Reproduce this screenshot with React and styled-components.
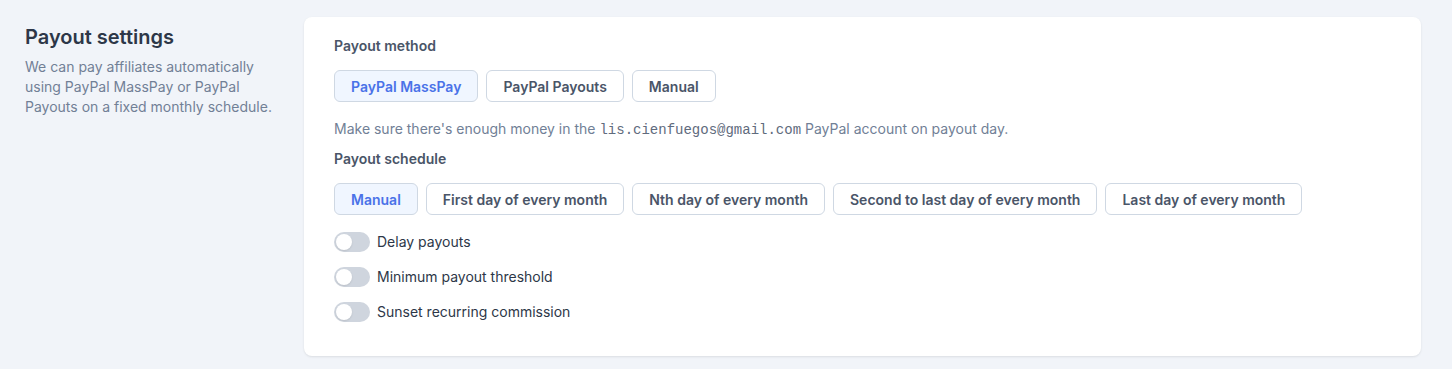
import React, {useState} from 'react';
import styled, {createGlobalStyle} from 'styled-components';

const GlobalStyle = createGlobalStyle`
  html, body {
    margin: 0;
    background: #f1f4f9;
    font-family: Inter, "Noto Sans", sans-serif;
  }
`;

const Page = styled.div`
  display: flex;
  align-items: flex-start;
  gap: 24px;
  padding: 17px 31px 13px 25px;
`;

const Intro = styled.div`
  width: 255px;
  flex-shrink: 0;
  padding-top: 8px;
`;

const Heading = styled.h2`
  margin: 0 0 8px;
  font-size: 20px;
  line-height: 24px;
  font-weight: 600;
  color: #2d3748;
`;

const Description = styled.p`
  margin: 0;
  font-size: 14px;
  line-height: 20px;
  color: #718096;
`;

const Card = styled.div`
  flex: 1;
  background: #fff;
  border-radius: 8px;
  box-shadow: 0 1px 3px rgba(0, 0, 0, 0.06), 0 1px 2px rgba(0, 0, 0, 0.04);
  padding: 19px 30px 34px;
  display: flex;
  flex-direction: column;
`;

const Label = styled.div`
  font-size: 14px;
  line-height: 20px;
  font-weight: 600;
  color: #4a5568;
  margin-top: ${p => p.$top || 0}px;
`;

const ButtonRow = styled.div`
  display: flex;
  gap: 8px;
  margin-top: 14px;
`;

const Choice = styled.button`
  height: 32px;
  padding: 0 16px;
  border-radius: 6px;
  border: 1px solid #cfd8e3;
  background: ${p => (p.$active ? '#f0f6ff' : '#fff')};
  color: ${p => (p.$active ? '#4a72e8' : '#4a5568')};
  font-family: inherit;
  font-size: 14px;
  font-weight: 600;
  cursor: pointer;
`;

const Help = styled.p`
  margin: 17px 0 0;
  font-size: 14px;
  line-height: 20px;
  color: #718096;
`;

const Mono = styled.code`
  font-family: "Liberation Mono", "DejaVu Sans Mono", monospace;
  font-size: 14px;
  color: #5f6b7d;
`;

const ToggleList = styled.div`
  display: flex;
  flex-direction: column;
  gap: 15px;
  margin-top: 17px;
`;

const ToggleRow = styled.label`
  display: flex;
  align-items: center;
  gap: 7px;
  font-size: 14px;
  line-height: 20px;
  color: #2d3748;
  cursor: pointer;
`;

const Track = styled.span`
  position: relative;
  width: 36px;
  height: 20px;
  border-radius: 10px;
  background: ${p => (p.$on ? '#4a72e8' : '#cfd5de')};
  flex-shrink: 0;
`;

const Knob = styled.span`
  position: absolute;
  top: 2px;
  left: ${p => (p.$on ? '18px' : '2px')};
  width: 16px;
  height: 16px;
  border-radius: 50%;
  background: #fff;
  box-shadow: 0 1px 2px rgba(0, 0, 0, 0.1);
`;

const methods = ['PayPal MassPay', 'PayPal Payouts', 'Manual'];
const schedules = [
  'Manual',
  'First day of every month',
  'Nth day of every month',
  'Second to last day of every month',
  'Last day of every month'
];
const toggles = ['Delay payouts', 'Minimum payout threshold', 'Sunset recurring commission'];

export default function App() {
  const [method, setMethod] = useState(methods[0]);
  const [schedule, setSchedule] = useState(schedules[0]);
  const [on, setOn] = useState({});

  return (
    <>
      <GlobalStyle />
      <Page>
        <Intro>
          <Heading>Payout settings</Heading>
          <Description>
            We can pay affiliates automatically using PayPal MassPay or PayPal Payouts on a fixed monthly schedule.
          </Description>
        </Intro>
        <Card>
          <Label>Payout method</Label>
          <ButtonRow>
            {methods.map(m => (
              <Choice key={m} $active={m === method} onClick={() => setMethod(m)}>{m}</Choice>
            ))}
          </ButtonRow>
          <Help>
            Make sure there's enough money in the <Mono>lis.cienfuegos@gmail.com</Mono> PayPal account on payout day.
          </Help>
          <Label $top={9}>Payout schedule</Label>
          <ButtonRow>
            {schedules.map(s => (
              <Choice key={s} $active={s === schedule} onClick={() => setSchedule(s)}>{s}</Choice>
            ))}
          </ButtonRow>
          <ToggleList>
            {toggles.map(t => (
              <ToggleRow key={t} onClick={() => setOn({...on, [t]: !on[t]})}>
                <Track $on={on[t]}><Knob $on={on[t]} /></Track>
                {t}
              </ToggleRow>
            ))}
          </ToggleList>
        </Card>
      </Page>
    </>
  );
}
